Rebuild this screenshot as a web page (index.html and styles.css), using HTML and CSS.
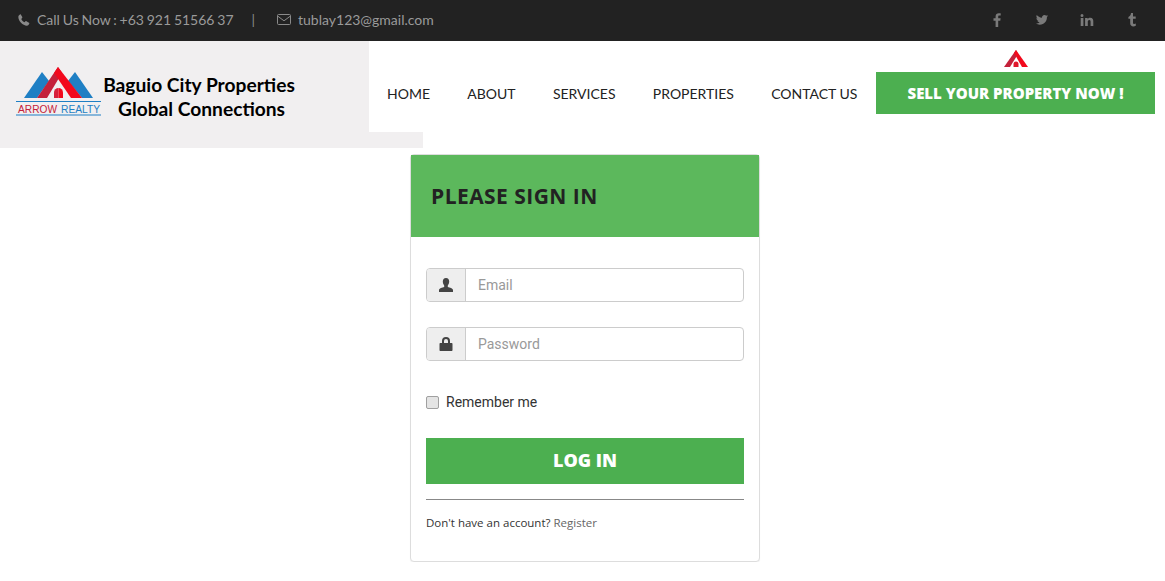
FILE: index.html
```html
<!DOCTYPE html>
<html lang="en">
<head>
    <meta charset="UTF-8">
    <title>Sign In</title>
    <link rel="stylesheet" href="styles.css">
</head>
<body>
    <div class="topbar">
        <div class="contact">
            <svg class="ico-phone" viewBox="0 0 14 14"><path d="M3.200 .6 5 3.600c.2.400.1.800-.2 1.100l-1 1c.7 1.700 2.200 3.200 3.900 3.900l1-1c.3-.3.800-.4 1.100-.2l3 1.800c.4.200.5.600.4 1-.4 1.400-1.400 2.400-2.800 2.400C5.500 13.600.4 8.500.4 3.600.4 2.200 1.300 1 2.300.5c.3-.1.700-.1.900.1z"/></svg>
            <span class="call">Call Us Now : +63 921 51566 37</span>
            <span class="sep">|</span>
            <svg class="ico-mail" viewBox="0 0 14 11"><path d="M1.500.5h11a1 1 0 0 1 1 1v8a1 1 0 0 1-1 1h-11a1 1 0 0 1-1-1v-8a1 1 0 0 1 1-1zM.8 2.200 7 6.800l6.200-4.600"/></svg>
            <span>tublay123@gmail.com</span>
        </div>
        <div class="social">
            <svg viewBox="-3 0 14 14"><path d="M5.200 14V7.800h2.100l.3-2.500H5.200V3.800c0-.7.200-1.200 1.200-1.200h1.300V.4C7.500.4 6.700.3 5.800.3 3.900.3 2.600 1.400 2.600 3.500v1.800H.5v2.500h2.100V14z"/></svg>
            <svg viewBox="-1 -1 16 14"><path d="M14 1.500c-.5.200-1 .4-1.600.5.600-.4 1-.9 1.200-1.600-.5.300-1.100.6-1.800.7A2.900 2.900 0 0 0 6.900 3.300C4.500 3.200 2.400 2 1 .3.200 1.600.6 3.300 1.900 4.200c-.5 0-.9-.1-1.300-.4 0 1.400 1 2.600 2.300 2.900-.4.100-.9.100-1.300 0 .4 1.200 1.400 2 2.700 2A5.800 5.800 0 0 1 0 10c1.300.8 2.800 1.300 4.400 1.300 5.400 0 8.400-4.500 8.200-8.500.6-.4 1-.8 1.400-1.300z"/></svg>
            <svg viewBox="-.5 -1 14 14"><path d="M.2 4h2.700v8H.2zM1.500 0a1.500 1.500 0 1 1 0 3 1.500 1.500 0 0 1 0-3zM4.600 4h2.500v1.100C7.500 4.400 8.400 3.800 9.700 3.800c2.600 0 3.100 1.700 3.100 3.900V12h-2.700V8.200c0-.9 0-2.100-1.300-2.100s-1.500 1-1.500 2V12H4.600z"/></svg>
            <svg viewBox="-3 0 14 14"><path d="M3 0h2v3.400h2.700v2.400H5v3.900c0 1.400 1.500 1.500 2.800.8v2.300c-2.700 1.200-5.600.6-5.600-2.500V5.800H.4V3.900C2 3.400 2.800 2 3 0z"/></svg>
        </div>
    </div>

    <div class="header">
        <a class="logo" href="#">
            <svg class="logo-mark" viewBox="0 0 86 50">
                <path fill="#1f7fc4" d="M8 32 26 6 33 15 21 32z"/>
                <path fill="#1f7fc4" d="M77 32 59 6 52 15 66 32z"/>
                <path fill="#c4213a" d="M21 32 42 1 46 7 31 32z"/>
                <path fill="#f2091c" d="M42 1 66 32H55L38 7z"/>
                <path fill="#d7203a" d="M38 32V26.500a4.500 4.500 0 0 1 4.500-4.500V32z"/>
                <path fill="#f2091c" d="M42.500 22a4.500 4.500 0 0 1 4.500 4.500V32h-4.500z"/>
                <rect x="0" y="35" width="85" height="1" fill="#1f7fc4"/>
                <rect x="0" y="48.500" width="85" height="1" fill="#1f7fc4"/>
                <text x="2" y="47" class="logo-a" textLength="39" lengthAdjust="spacingAndGlyphs">ARROW</text>
                <text x="45" y="47" class="logo-b" textLength="39" lengthAdjust="spacingAndGlyphs">REALTY</text>
            </svg>
            <div class="logo-text">
                <div>Baguio City Properties</div>
                <div class="logo-line2">Global Connections</div>
            </div>
        </a>
        <div class="nav">
            <a href="#">HOME</a>
            <a href="#">ABOUT</a>
            <a href="#">SERVICES</a>
            <a href="#">PROPERTIES</a>
            <a href="#">CONTACT US</a>
        </div>
        <div class="sell">
            <svg class="roof" viewBox="0 0 24 17">
                <path fill="#c4213a" d="M0 17 12 0 14 4 6 17z"/>
                <path fill="#f2091c" d="M12 0 24 17H18L10 3z"/>
                <path fill="#e0162b" d="M9.500 17v-3a2.500 2.500 0 0 1 5 0v3z"/>
            </svg>
            <a class="sell-btn" href="#">SELL YOUR PROPERTY NOW !</a>
        </div>
    </div>
    <div class="logo-strip"></div>

    <div class="page">
        <div class="card">
            <div class="card-head">PLEASE SIGN IN</div>
            <form class="card-body">
                <div class="field">
                    <span class="addon">
                        <svg viewBox="0 0 14 14"><path d="M7 0c2.200 0 3.200 1.500 3.200 3.600 0 1.500-.6 3-1.400 3.800v1.500c1.800.6 5.200 1.300 5.200 3.100v2H0v-2c0-1.800 3.400-2.500 5.200-3.100V7.400C4.400 6.600 3.800 5.100 3.800 3.600 3.800 1.500 4.800 0 7 0z"/></svg>
                    </span>
                    <input type="text" placeholder="Email">
                </div>
                <div class="field">
                    <span class="addon">
                        <svg viewBox="0 0 13 14"><path d="M2.500 6V4a4 4 0 0 1 8 0v2h1.500c.6 0 1 .4 1 1v6c0 .6-.4 1-1 1H1c-.6 0-1-.4-1-1V7c0-.6.4-1 1-1zm2 0h4V4a2 2 0 0 0-4 0z"/></svg>
                    </span>
                    <input type="password" placeholder="Password">
                </div>
                <label class="remember"><input type="checkbox"> Remember me</label>
                <button class="login-btn" type="button">LOG IN</button>
                <div class="divider"></div>
                <p class="signup">Don't have an account? <a href="#">Register</a></p>
            </form>
        </div>
    </div>
</body>
</html>
```

FILE: styles.css
```css
* {
    box-sizing: border-box;
}

body {
    margin: 0;
    background-color: #fff;
    font-family: "Lato", sans-serif;
    color: #222;
}

a {
    text-decoration: none;
}

/* barra de topo */
.topbar {
    height: 41px;
    background-color: #222;
    color: #9a9a9a;
    display: flex;
    justify-content: space-between;
    align-items: center;
    padding: 0 26px 2px 18px;
    font-size: 14px;
}

.contact {
    display: flex;
    align-items: center;
}

.contact svg {
    fill: #8a8a8a;
}

.ico-phone {
    width: 12px;
    height: 12px;
    margin-right: 7px;
}

.ico-mail {
    width: 14px;
    height: 11px;
    margin-right: 7px;
    fill: none !important;
    stroke: #8a8a8a;
    stroke-width: 1;
}

.call {
    word-spacing: -.8px;
}

.sep {
    margin: 0 22px 0 18px;
    color: #8a8a8a;
}

.social {
    display: flex;
    align-items: center;
    gap: 31px;
}

.social svg {
    width: 14px;
    height: 14px;
    fill: #7a7a7a;
}

/* cabecalho */
.header {
    height: 91px;
    display: flex;
}

.logo {
    width: 369px;
    background-color: #f1eff0;
    display: flex;
    align-items: flex-start;
    padding: 25px 0 0 16px;
    color: #000;
}

.logo-mark {
    width: 86px;
    height: 50px;
    flex-shrink: 0;
}

.logo-a {
    font-family: "Liberation Sans", sans-serif;
    font-size: 11px;
    fill: #c4213a;
}

.logo-b {
    font-family: "Liberation Sans", sans-serif;
    font-size: 11px;
    fill: #1f7fc4;
}

.logo-text {
    margin-left: 1px;
    padding-top: 7px;
    width: 192px;
    text-align: center;
    font-family: "Lato", sans-serif;
    font-weight: 700;
    font-size: 19.200px;
    line-height: 24px;
    white-space: nowrap;
}

.logo-line2 {
    padding-left: 5px;
}

.nav {
    display: flex;
    gap: 37.300px;
    padding: 44px 0 0 18px;
    width: 507px;
    font-size: 14px;
    line-height: 18px;
    white-space: nowrap;
}

.nav a {
    color: #222;
}

.sell {
    width: 279px;
    display: flex;
    flex-direction: column;
    align-items: center;
    padding-top: 9px;
}

.roof {
    width: 24px;
    height: 17px;
    margin-bottom: 5px;
    display: block;
}

.sell-btn {
    width: 279px;
    height: 42px;
    background-color: #4caf50;
    color: #fff;
    font-family: "Open Sans", sans-serif;
    font-weight: 800;
    font-size: 15px;
    line-height: 42px;
    text-align: center;
}

.logo-strip {
    width: 423px;
    height: 16px;
    background-color: #f1eff0;
}

/* cartao de login */
.page {
    display: flex;
    justify-content: center;
    padding: 6px 0 0 5px;
}

.card {
    width: 350px;
    height: 408px;
    border: 1px solid #ddd;
    border-radius: 4px;
    background-color: #fff;
    box-shadow: 0 1px 1px rgba(0, 0, 0, 0.05);
}

.card-head {
    height: 82px;
    background-color: #5cb85c;
    padding: 0 20px;
    font-family: "Open Sans", sans-serif;
    font-weight: 700;
    font-size: 21px;
    letter-spacing: .45px;
    line-height: 82px;
    color: #222;
}

.card-body {
    padding: 31px 15px 0;
}

.field {
    display: flex;
    height: 34px;
    margin-bottom: 25px;
    border: 1px solid #ccc;
    border-radius: 4px;
}

.addon {
    width: 39px;
    padding-right: 1px;
    background-color: #eee;
    border-right: 1px solid #ccc;
    border-radius: 3px 0 0 3px;
    display: flex;
    align-items: center;
    justify-content: center;
}

.addon svg {
    width: 14px;
    height: 14px;
    fill: #444;
}

.field input {
    flex: 1;
    min-width: 0;
    border: none;
    outline: none;
    background: none;
    padding: 0 12px;
    font-family: "Roboto", sans-serif;
    font-size: 14px;
    border-radius: 0 3px 3px 0;
}

.field input::placeholder {
    color: #999;
}

.remember {
    display: flex;
    align-items: center;
    gap: 7px;
    margin-top: 31px;
    height: 20px;
    font-family: "Roboto", sans-serif;
    font-size: 14px;
    color: #333;
}

.remember input {
    appearance: none;
    width: 13px;
    height: 13px;
    margin: 1px 0 0 0;
    background-color: #e4e4e4;
    border: 1px solid #a0a0a0;
    border-radius: 2px;
}

.login-btn {
    display: block;
    width: 100%;
    height: 46px;
    margin-top: 26px;
    padding: 0 0 2px;
    border: none;
    background-color: #4caf50;
    color: #fff;
    font-family: "Open Sans", sans-serif;
    font-weight: 800;
    font-size: 18px;
}

.divider {
    height: 1px;
    margin-top: 15px;
    background-color: #888;
}

.signup {
    margin: 14px 0 0;
    font-family: "Open Sans", sans-serif;
    font-size: 11.500px;
    line-height: 17px;
    color: #333;
}

.signup a {
    color: #666;
}
```
